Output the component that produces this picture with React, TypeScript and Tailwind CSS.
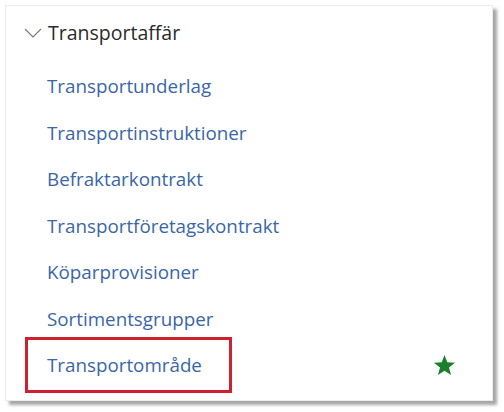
const links = [
  "Transportunderlag",
  "Transportinstruktioner",
  "Befraktarkontrakt",
  "Transportföretagskontrakt",
  "Köparprovisioner",
  "Sortimentsgrupper",
];

export default function App() {
  return (
    <div
      className="w-[504px] h-[412px] bg-white pt-[5px] pl-[5px]"
      style={{ fontFamily: '"Open Sans", "Noto Sans", sans-serif' }}
    >
      <div className="w-[488px] h-[396px] bg-white border border-[#ececec] shadow-[4px_4px_3px_rgba(0,0,0,0.35)] pt-[4px]">
        <div className="h-[46px] flex items-center pl-[18px] text-[19.5px] text-[#2b2b2b]">
          <svg width="18" height="10" viewBox="0 0 18 10" className="mr-[6px]">
            <path d="M1 1l8 8 8-8" fill="none" stroke="#777" strokeWidth="1.1" />
          </svg>
          Transportaffär
        </div>
        <div className="mt-[7px]">
          {links.map((l) => (
            <div key={l} className="h-[46.5px] flex items-center pl-[41px] text-[18.8px] text-[#3a66a8]">
              {l}
            </div>
          ))}
          <div className="-mt-[5px] h-[56px] flex items-center">
            <div className="ml-[19px] w-[207px] h-[56px] border-[3px] border-[#d0202f] flex items-center pl-[19px] text-[18.8px] text-[#3a66a8]">
              Transportområde
            </div>
            <svg width="23" height="23" viewBox="0 0 24 24" className="ml-auto mr-[36px]">
              <polygon
                points="12,1 14.9,8.6 23,9 16.7,14.1 18.8,22 12,17.5 5.2,22 7.3,14.1 1,9 9.1,8.6"
                fill="#1a7f2a"
              />
            </svg>
          </div>
        </div>
      </div>
    </div>
  );
}
